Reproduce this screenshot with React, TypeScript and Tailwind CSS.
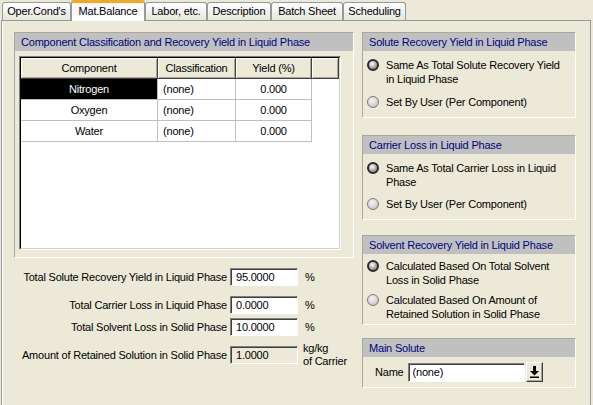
import React from 'react';

const font = { fontFamily: '"Liberation Sans", Arial, sans-serif' };

interface TabDef {
    label: string;
    width: string;
    active?: boolean;
}

const tabs: TabDef[] = [
    { label: "Oper.Cond's", width: 'w-[69px]' },
    { label: 'Mat.Balance', width: 'w-[74px]', active: true },
    { label: 'Labor, etc.', width: 'w-[62px]' },
    { label: 'Description', width: 'w-[64px]' },
    { label: 'Batch Sheet', width: 'w-[72px]' },
    { label: 'Scheduling', width: 'w-[63px]' }
];

const rows = [
    { name: 'Nitrogen', cls: '(none)', yieldPct: '0.000', selected: true },
    { name: 'Oxygen', cls: '(none)', yieldPct: '0.000' },
    { name: 'Water', cls: '(none)', yieldPct: '0.000' }
];

function Radio({ checked }: { checked?: boolean }) {
    return (
        <span
            className={
                'mt-[1px] flex h-[12px] w-[12px] shrink-0 items-center justify-center rounded-full ' +
                (checked
                    ? 'border-[2px] border-[#2b2b2b] bg-[radial-gradient(circle_at_40%_35%,#ffffff_0%,#b8b8b8_45%,#6a6a6a_100%)]'
                    : 'border border-[#7a7a7a] bg-[radial-gradient(circle_at_40%_35%,#f4f4f4_0%,#d2d2d2_60%,#acacac_100%)]')
            }
        />
    );
}

function GroupBox({ title, className, children }: { title: string; className?: string; children: React.ReactNode }) {
    return (
        <div className={'border border-t-[#ACA899] border-l-[#ACA899] border-b-white border-r-white ' + (className ?? '')}>
            <div className="flex h-[18px] items-center bg-[#C0C0C0] pl-[6px] text-[#000080]">{title}</div>
            {children}
        </div>
    );
}

function RadioOption({ lines, checked }: { lines: string[]; checked?: boolean }) {
    return (
        <div className="flex items-start gap-[7px] pl-[4px]">
            <Radio checked={checked} />
            <div className="leading-[14px]">
                {lines.map((l) => (
                    <div key={l}>{l}</div>
                ))}
            </div>
        </div>
    );
}

function NumField({ value, disabled }: { value: string; disabled?: boolean }) {
    return (
        <div
            className={
                'ml-[3px] flex h-[18px] w-[68px] items-center border border-t-[#808080] border-l-[#808080] border-b-white border-r-white pl-[5px] shadow-[inset_1px_1px_0_#404040] ' +
                (disabled ? 'bg-[#ECE9D8]' : 'bg-white')
            }
        >
            {value}
        </div>
    );
}

export default function App(): React.ReactElement {
    return (
        <div
            className="flex h-[405px] w-[593px] flex-col overflow-hidden bg-[#ECE9D8] text-[11px] tracking-[-0.2px] text-black"
            style={font}
        >
            {/* Tabs */}
            <div className="relative z-10 flex h-[20px] items-end pl-[2px]">
                {tabs.map((t) =>
                    t.active ? (
                        <div
                            key={t.label}
                            className={`${t.width} -mb-px flex h-[21px] items-center justify-center rounded-t-[3px] border-x border-[#919B9C] border-t-[3px] border-t-[#F5A623] bg-[#FCFCFE] pb-[1px]`}
                        >
                            {t.label}
                        </div>
                    ) : (
                        <div
                            key={t.label}
                            className={`${t.width} flex h-[18px] items-center justify-center rounded-t-[3px] border border-b-0 border-[#919B9C] bg-gradient-to-b from-white to-[#E6E5DE]`}
                        >
                            {t.label}
                        </div>
                    )
                )}
            </div>

            {/* Panel */}
            <div className="ml-[1px] flex w-[590px] flex-1 border-x border-t border-[#919B9C] pl-[12px] pt-[11px] shadow-[inset_1px_0_0_#fff]">
                {/* Left column */}
                <div className="flex w-[340px] flex-col">
                    <GroupBox title="Component Classification and Recovery Yield in Liquid Phase" className="pb-[7px]">
                        <div className="ml-[4px] mt-[5px] h-[194px] w-[322px] border border-t-[#808080] border-l-[#808080] border-b-white border-r-white">
                            <div className="flex h-full flex-col border border-t-black border-l-black border-b-[#D4D0C8] border-r-[#D4D0C8] bg-white">
                                <div className="flex h-[21px] shrink-0">
                                    {[
                                        ['Component', 'w-[137px]'],
                                        ['Classification', 'w-[78px]'],
                                        ['Yield (%)', 'w-[76px]'],
                                        ['', 'flex-1']
                                    ].map(([label, w], i) => (
                                        <div
                                            key={i}
                                            className={`${w} flex items-center justify-center border-b border-r border-[#404040] bg-[#ECE9D8] shadow-[inset_1px_1px_0_#fff,inset_-1px_-1px_0_#ACA899]`}
                                        >
                                            {label}
                                        </div>
                                    ))}
                                </div>
                                {rows.map((r) => (
                                    <div key={r.name} className="flex h-[21px] shrink-0">
                                        <div
                                            className={
                                                'flex w-[137px] items-center justify-center border-b border-r border-[#C0C0C0] ' +
                                                (r.selected ? 'bg-black text-white' : '')
                                            }
                                        >
                                            {r.name}
                                        </div>
                                        <div className="flex w-[78px] items-center border-b border-r border-[#C0C0C0] pl-[5px]">
                                            {r.cls}
                                        </div>
                                        <div className="flex w-[76px] items-center justify-center border-b border-r border-[#C0C0C0]">
                                            {r.yieldPct}
                                        </div>
                                    </div>
                                ))}
                            </div>
                        </div>
                    </GroupBox>

                    <div className="mt-[10px] flex items-center">
                        <div className="w-[213px] text-right">Total Solute Recovery Yield in Liquid Phase</div>
                        <NumField value="95.0000" />
                        <span className="ml-[7px]">%</span>
                    </div>
                    <div className="mt-[10px] flex items-center">
                        <div className="w-[213px] text-right">Total Carrier Loss in Liquid Phase</div>
                        <NumField value="0.0000" />
                        <span className="ml-[7px]">%</span>
                    </div>
                    <div className="mt-[4px] flex items-center">
                        <div className="w-[213px] text-right">Total Solvent Loss in Solid Phase</div>
                        <NumField value="10.0000" />
                        <span className="ml-[7px]">%</span>
                    </div>
                    <div className="mt-[6px] flex items-center">
                        <div className="w-[213px] text-right">Amount of Retained Solution in Solid Phase</div>
                        <NumField value="1.0000" disabled />
                        <div className="ml-[5px] leading-[13px]">
                            <div>kg/kg</div>
                            <div>of Carrier</div>
                        </div>
                    </div>
                </div>

                {/* Right column */}
                <div className="ml-[8px] flex w-[214px] flex-col">
                    <GroupBox title="Solute Recovery Yield in Liquid Phase" className="pb-[8px]">
                        <div className="mt-[7px] flex flex-col gap-[9px]">
                            <RadioOption checked lines={['Same As Total Solute Recovery Yield', 'in Liquid Phase']} />
                            <RadioOption lines={['Set By User (Per Component)']} />
                        </div>
                    </GroupBox>

                    <GroupBox title="Carrier Loss in Liquid Phase" className="mt-[17px] pb-[8px]">
                        <div className="mt-[7px] flex flex-col gap-[8px]">
                            <RadioOption checked lines={['Same As Total Carrier Loss in Liquid', 'Phase']} />
                            <RadioOption lines={['Set By User (Per Component)']} />
                        </div>
                    </GroupBox>

                    <GroupBox title="Solvent Recovery Yield in Liquid Phase" className="mt-[15px] pb-[3px]">
                        <div className="mt-[5px] flex flex-col gap-[6px]">
                            <RadioOption checked lines={['Calculated Based On Total Solvent', 'Loss in Solid Phase']} />
                            <RadioOption lines={['Calculated Based On Amount of', 'Retained Solution in Solid Phase']} />
                        </div>
                    </GroupBox>

                    <GroupBox title="Main Solute" className="mt-[13px] pb-[5px]">
                        <div className="mt-[5px] flex items-center pl-[12px]">
                            <span>Name</span>
                            <div className="ml-[4px] flex h-[19px] w-[117px] items-center border border-t-[#808080] border-l-[#808080] border-b-white border-r-white bg-white pl-[4px] shadow-[inset_1px_1px_0_#404040]">
                                (none)
                            </div>
                            <div className="ml-[1px] flex h-[20px] w-[17px] items-center justify-center border border-t-white border-l-white border-b-[#404040] border-r-[#404040] bg-[#ECE9D8] shadow-[inset_-1px_-1px_0_#ACA899]">
                                <svg width="9" height="12" viewBox="0 0 9 12">
                                    <rect x="3" y="0" width="3" height="5" fill="#000" />
                                    <polygon points="0,5 9,5 4.5,9.5" fill="#000" />
                                    <rect x="0" y="10.5" width="9" height="1.5" fill="#000" />
                                </svg>
                            </div>
                        </div>
                    </GroupBox>
                </div>
            </div>
        </div>
    );
}
